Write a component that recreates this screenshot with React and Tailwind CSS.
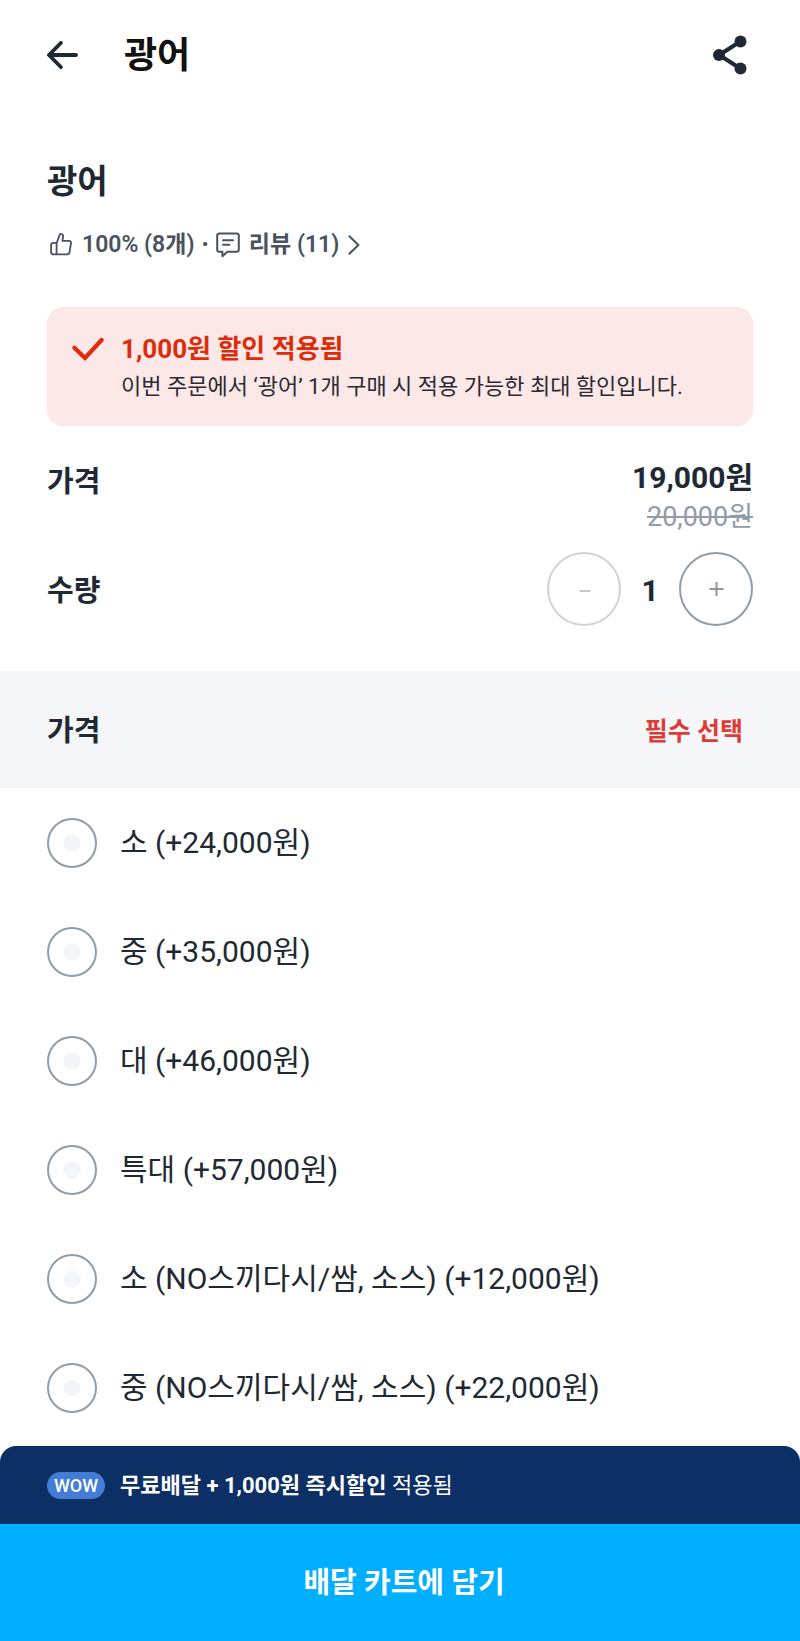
import { useState } from "react";

const options = [
  "소 (+24,000원)",
  "중 (+35,000원)",
  "대 (+46,000원)",
  "특대 (+57,000원)",
  "소 (NO스끼다시/쌈, 소스) (+12,000원)",
  "중 (NO스끼다시/쌈, 소스) (+22,000원)",
];

function BackIcon() {
  return (
    <svg width="32" height="28" viewBox="0 0 32 28" fill="none" stroke="currentColor" strokeWidth="3.9" strokeLinecap="round" strokeLinejoin="round" aria-hidden="true">
      <path d="M13.8 2 2 14l11.8 12M2.5 14H29" />
    </svg>
  );
}

function ShareIcon() {
  return (
    <svg width="34" height="40" viewBox="0 0 34 40" fill="currentColor" aria-hidden="true">
      <path d="M27.7 6.2 6.2 20l21.5 13.8" fill="none" stroke="currentColor" strokeWidth="4.2" />
      <circle cx="27.5" cy="6.4" r="6" />
      <circle cx="6" cy="20" r="6" />
      <circle cx="27.5" cy="33.6" r="6" />
    </svg>
  );
}

function ThumbIcon() {
  return (
    <svg width="22" height="24" viewBox="0 0 22 24" fill="none" stroke="currentColor" strokeWidth="1.8" strokeLinejoin="round" strokeLinecap="round" aria-hidden="true">
      <path d="M6.8 9.8 9.6 1.9c.4-.8 1.1-1.1 1.9-.9 1.3.3 1.8 1.2 1.6 2.4l-.7 4.5h6.8c1.2 0 2 .9 1.8 2.1l-1.5 9.4c-.2 1.3-1 1.9-2.2 1.9H3.2c-1.3 0-2.1-.8-2.1-2.1V12c0-1.4.8-2.2 2.1-2.2h3.6Zm-.2.2v11.3" />
    </svg>
  );
}

function ReviewIcon() {
  return (
    <svg width="24" height="26" viewBox="0 0 24 26" fill="none" stroke="currentColor" strokeWidth="2" strokeLinejoin="round" strokeLinecap="round" aria-hidden="true">
      <path d="M3.4 1.4h17.2c1.4 0 2.2.8 2.2 2.2v14c0 1.4-.8 2.2-2.2 2.2h-9.2l-5 4.4v-4.4h-3c-1.4 0-2.2-.8-2.2-2.2v-14c0-1.4.8-2.2 2.2-2.2ZM7 8.2h10M7 12.8h6.4" />
    </svg>
  );
}

function ChevronIcon() {
  return (
    <svg width="12" height="20" viewBox="0 0 12 20" fill="none" stroke="currentColor" strokeWidth="2" strokeLinecap="round" strokeLinejoin="round" aria-hidden="true">
      <path d="M1.4 1.2 10.4 10 1.4 18.8" />
    </svg>
  );
}

function CheckIcon() {
  return (
    <svg width="32" height="24" viewBox="0 0 32 24" fill="none" stroke="currentColor" strokeWidth="4.2" strokeLinecap="round" aria-hidden="true">
      <path d="M2.4 10.8 13 21 29.6 3" />
    </svg>
  );
}

export default function App() {
  const [quantity, setQuantity] = useState(1);

  return (
    <div className="flex min-h-screen flex-col bg-white font-['Roboto','Noto_Sans_CJK_KR',sans-serif] text-[#1f2933]">
      <header className="flex h-[109px] items-center px-[47px]">
        <button type="button" aria-label="뒤로" className="mr-[45px]">
          <BackIcon />
        </button>
        <p className="flex-1 pt-[2px] text-[36px] leading-none font-bold text-[#111111]">광어</p>
        <button type="button" aria-label="공유" className="mr-[6px]">
          <ShareIcon />
        </button>
      </header>

      <main className="flex-1">
        <section className="px-[47px] pt-[49px] pb-[45px]">
          <h1 className="text-[33px] leading-[48px] font-bold">광어</h1>
          <div className="mt-[23px] flex h-8 items-center pl-[3px] text-[23px] leading-8 font-semibold text-[#49525e]">
            <ThumbIcon />
            <span className="ml-[10px]">100% (8개)</span>
            <span className="mx-[7px] font-black">·</span>
            <a href="#reviews" className="flex items-center">
              <ReviewIcon />
              <span className="mx-[9px]">리뷰 (11)</span>
              <ChevronIcon />
            </a>
          </div>

          <div className="mt-[46px] flex rounded-2xl bg-[#fce8e6] px-[25px] pt-[22px] pb-[21px] text-[#dd2c0b]">
            <div className="mr-[17px] flex h-10 items-center">
              <CheckIcon />
            </div>
            <div>
              <p className="text-[26px] leading-10 font-bold">1,000원 할인 적용됨</p>
              <p className="text-[22px] leading-9 text-[#2a2a35]">이번 주문에서 ‘광어’ 1개 구매 시 적용 가능한 최대 할인입니다.</p>
            </div>
          </div>

          <div className="mt-[32px] flex items-start justify-between">
            <h2 className="pt-[4px] text-[29px] leading-10 font-bold">가격</h2>
            <div className="text-right">
              <p className="text-[30px] leading-10 font-bold">19,000원</p>
              <p className="text-[27px] leading-[38px] text-[#929ca8] line-through">20,000원</p>
            </div>
          </div>

          <div className="mt-[16px] flex items-center justify-between">
            <h2 className="pt-[4px] text-[29px] leading-10 font-bold">수량</h2>
            <div className="flex items-center">
              <button
                type="button"
                aria-label="수량 줄이기"
                disabled={quantity <= 1}
                onClick={() => setQuantity(quantity - 1)}
                className="flex size-[74px] items-center justify-center rounded-full border-2 border-[#929ca8] text-[#929ca8] disabled:border-[#d0d4d9] disabled:text-[#c3c8ce]"
              >
                <svg width="16" height="16" viewBox="0 0 16 16" stroke="currentColor" strokeWidth="2" aria-hidden="true">
                  <path d="M3.5 10h11" />
                </svg>
              </button>
              <output className="w-[58px] pt-[4px] text-center text-[30px] leading-10 font-bold">{quantity}</output>
              <button
                type="button"
                aria-label="수량 늘리기"
                onClick={() => setQuantity(quantity + 1)}
                className="flex size-[74px] items-center justify-center rounded-full border-2 border-[#929ca8] text-[#8b95a1]"
              >
                <svg width="16" height="16" viewBox="0 0 16 16" stroke="currentColor" strokeWidth="2" aria-hidden="true">
                  <path d="M1.5 8h14M8.5 1v14" />
                </svg>
              </button>
            </div>
          </div>
        </section>

        <fieldset>
          <legend className="flex h-[117px] w-full items-center justify-between bg-[#f4f6f8] pt-[4px] pr-[57px] pl-[47px] font-bold">
            <span className="text-[29px]">가격</span>
            <span className="text-[25px] text-[#dd3b37]">필수 선택</span>
          </legend>
          {options.map((option) => (
            <label key={option} className="flex h-[109px] items-center px-[47px] text-[30px] leading-10">
              <input
                type="radio"
                name="size"
                className="mr-[23px] size-[50px] shrink-0 appearance-none rounded-full border-2 border-[#929ca8] bg-[radial-gradient(circle,#f4f5f8_8px,transparent_9px)] checked:border-[#00afff] checked:bg-[radial-gradient(circle,#00afff_8px,transparent_9px)]"
              />
              {option}
            </label>
          ))}
        </fieldset>
      </main>

      <footer className="sticky bottom-0 text-white">
        <div className="flex h-[78px] items-center rounded-t-2xl bg-[#0c2f66] px-[47px] text-[22px]">
          <span className="mr-[15px] flex h-[27px] w-[58px] items-center justify-center rounded-full bg-[#437dd6] text-[18px] font-medium">WOW</span>
          <p>
            <strong className="font-bold">무료배달 + 1,000원 즉시할인</strong> 적용됨
          </p>
        </div>
        <button type="button" className="h-[117px] w-full bg-[#00afff] pt-[2px] pl-2 text-[29px] font-bold">
          배달 카트에 담기
        </button>
      </footer>
    </div>
  );
}
